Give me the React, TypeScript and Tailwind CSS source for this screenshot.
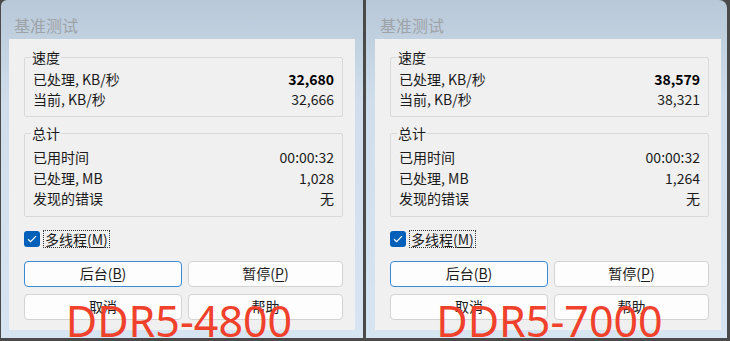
const ui = { fontFamily: '"Noto Sans CJK SC", "Noto Sans", sans-serif' };

type Row = { label: string; value: string; bold?: boolean };

type Bench = {
   name: string;
   speed: Row[];
   total: Row[];
};

const benches: Bench[] = [
   {
      name: "DDR5-4800",
      speed: [
         { label: "已处理, KB/秒", value: "32,680", bold: true },
         { label: "当前, KB/秒", value: "32,666" },
      ],
      total: [
         { label: "已用时间", value: "00:00:32" },
         { label: "已处理, MB", value: "1,028" },
         { label: "发现的错误", value: "无" },
      ],
   },
   {
      name: "DDR5-7000",
      speed: [
         { label: "已处理, KB/秒", value: "38,579", bold: true },
         { label: "当前, KB/秒", value: "38,321" },
      ],
      total: [
         { label: "已用时间", value: "00:00:32" },
         { label: "已处理, MB", value: "1,264" },
         { label: "发现的错误", value: "无" },
      ],
   },
];

function Group({ title, rows, rowClass, padTop }: { title: string; rows: Row[]; rowClass: string; padTop: string }) {
   return (
      <fieldset className={`border border-[#d9d9d9] rounded-[2px] px-[8px] pb-[7px] ${padTop}`}>
         <legend className="-ml-[2px] px-[1px] text-[14px] leading-[20px] text-[#1a1a1a]">{title}</legend>
         {rows.map((r) => (
            <div key={r.label} className={`flex justify-between text-[14px] text-[#1a1a1a] ${rowClass}`}>
               <span>{r.label}</span>
               <span className={r.bold ? "font-bold text-black" : ""}>{r.value}</span>
            </div>
         ))}
      </fieldset>
   );
}

function Btn({ text, hot, primary }: { text: string; hot?: string; primary?: boolean }) {
   return (
      <div
         className={`h-[26px] rounded-[4px] bg-[#fdfdfd] flex items-center justify-center text-[14px] text-[#1a1a1a] border ${
            primary ? "border-[#3a8ad6]" : "border-[#d3d3d3]"
         }`}
      >
         {text}
         {hot && (
            <>
               (<span className="underline underline-offset-2">{hot}</span>)
            </>
         )}
      </div>
   );
}

function Window({ b, pad, corner, shift }: { b: Bench; pad: string; corner: string; shift: string }) {
   return (
      <div className={`relative h-[338px] bg-gradient-to-b from-[#b8c8d8] via-[#d0deec] via-30% to-[#d7e4f1] ${pad} ${corner}`}>
         {/* Title */}
         <div className="h-[39px] pt-[14px] pl-[5px] text-[16px] leading-[22px] text-[#9ea3a8]">基准测试</div>

         {/* Panel */}
         <div className="h-[291px] w-[346px] bg-[#f0f0f0] pl-[15px] pr-[12px] pt-[8px] flex flex-col">
            <Group title="速度" rows={b.speed} rowClass="h-[20px] leading-[20px]" padTop="pt-[2px]" />
            <div className="h-[6px]" />
            <Group title="总计" rows={b.total} rowClass="h-[20.5px] leading-[20.5px]" padTop="pt-[4px]" />

            {/* Checkbox */}
            <div className="mt-[14px] flex items-center gap-[3px] h-[17px]">
               <div className="w-[16px] h-[16px] rounded-[3px] bg-[#005fb8] flex items-center justify-center">
                  <svg width="10" height="8" viewBox="0 0 10 8" fill="none">
                     <path d="M1 4.2 L3.6 6.6 L9 1.2" stroke="white" strokeWidth="1.2" />
                  </svg>
               </div>
               <span className="border border-dotted border-[#333] px-[1px] text-[14px] leading-[16px] text-[#1a1a1a]">
                  多线程(<span className="underline underline-offset-2">M</span>)
               </span>
            </div>

            {/* Buttons */}
            <div className="mt-[13px] grid grid-cols-[158px_155px] gap-x-[6px] gap-y-[7px]">
               <Btn text="后台" hot="B" primary />
               <Btn text="暂停" hot="P" />
               <Btn text="取消" />
               <Btn text="帮助" />
            </div>
         </div>

         {/* Caption */}
         <div
            className={`absolute left-0 right-0 top-[299px] text-center text-[43px] leading-none text-[#f0412c] ${shift}`}
            style={{ fontFamily: '"Noto Sans", sans-serif' }}
         >
            {b.name}
         </div>
      </div>
   );
}

export default function App() {
   return (
      <div className="w-[730px] h-[341px] bg-[#4a4a4a] flex items-start gap-[3px] overflow-hidden" style={ui}>
         <div className="ml-[1px]">
            <Window b={benches[0]} pad="w-[362px] pl-[8px] pr-[8px]" corner="rounded-tl-[6px]" shift="pr-[6px]" />
         </div>
         <Window b={benches[1]} pad="w-[361px] pl-[9px] pr-[6px]" corner="rounded-tr-[8px]" shift="pl-[6px]" />
      </div>
   );
}
